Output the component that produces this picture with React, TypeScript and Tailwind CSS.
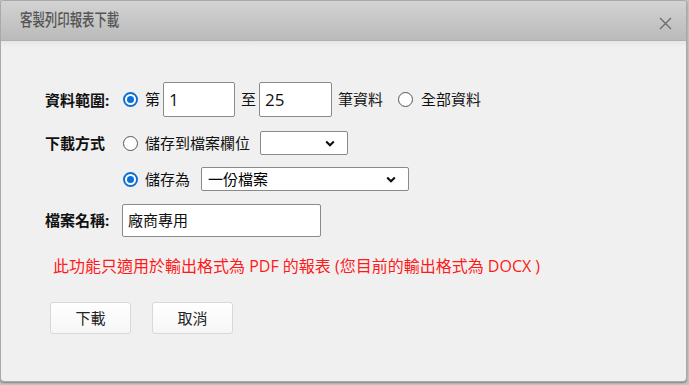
import React from "react";

const FONT = '"Open Sans", "Noto Sans CJK TC", sans-serif';

function Radio({ checked }: { checked?: boolean }) {
  return checked ? (
    <span className="w-[15px] h-[15px] rounded-full border-[2px] border-[#0b6fd3] bg-white flex items-center justify-center shrink-0">
      <span className="w-[7px] h-[7px] rounded-full bg-[#0b6fd3]" />
    </span>
  ) : (
    <span className="block w-[15px] h-[15px] rounded-full border border-[#555] bg-white shrink-0" />
  );
}

function Chevron() {
  return (
    <svg width="10" height="7" viewBox="0 0 10 7" className="shrink-0">
      <polyline points="1.2,1.4 5,5.2 8.8,1.4" fill="none" stroke="#111" strokeWidth="2.1" />
    </svg>
  );
}

function Select({ w, text }: { w: string; text?: string }) {
  return (
    <div className={`${w} h-[24px] bg-white border border-[#8a8a8a] rounded-[2px] flex items-center justify-between pl-[6px] pr-[12px]`}>
      <span className="text-[15px] text-black leading-none">{text}</span>
      <Chevron />
    </div>
  );
}

export default function App() {
  return (
    <div className="w-[689px] h-[385px] bg-[#c4c4c4] overflow-hidden relative" style={{ fontFamily: FONT }}>
      <div className="w-[687px] h-[382px] bg-[#f0f0f0] border border-[#a9a9a9] rounded-[4px] overflow-hidden flex flex-col shadow-[0_1px_2px_rgba(0,0,0,0.35)]">
        <div className="h-[40px] shrink-0 bg-gradient-to-b from-[#d3d3d3] to-[#bababa] flex items-center justify-between pl-[19px] pr-[14px] border-b border-[#b0b0b0]">
          <span className="text-[17px] font-medium text-[#555] leading-none mt-[-3px] scale-x-[0.73] origin-left whitespace-nowrap">客製列印報表下載</span>
          <svg width="13" height="13" viewBox="0 0 13 13" className="mt-[6px]">
            <path d="M1 1 L12 12 M12 1 L1 12" stroke="#6a6a6a" strokeWidth="1.3" />
          </svg>
        </div>
        <div className="flex-1 bg-gradient-to-b from-[#e6e6e6] to-[#f0f0f0] bg-[length:100%_6px] bg-no-repeat pl-[44px] pt-[41px] text-[15px] text-[#111]">
          {/* Row 1 */}
          <div className="flex items-center h-[35px]">
            <span className="w-[78px] font-bold leading-none mt-[2px]">資料範圍:</span>
            <Radio checked />
            <span className="ml-[7px] leading-none">第</span>
            <div className="ml-[3px] w-[72px] h-[35px] bg-white border border-[#8a8a8a] rounded-[2px] flex items-center pl-[5px] text-[17px]">1</div>
            <span className="ml-[6px] leading-none">至</span>
            <div className="ml-[3px] w-[73px] h-[35px] bg-white border border-[#8a8a8a] rounded-[2px] flex items-center pl-[5px] text-[17px]">25</div>
            <span className="ml-[6px] leading-none">筆資料</span>
            <span className="ml-[15px]"><Radio /></span>
            <span className="ml-[8px] leading-none">全部資料</span>
          </div>
          {/* Row 2 */}
          <div className="flex items-center h-[24px] mt-[14px]">
            <span className="w-[78px] font-bold leading-none">下載方式</span>
            <Radio />
            <span className="ml-[7px] leading-none">儲存到檔案欄位</span>
            <div className="ml-[10px]"><Select w="w-[88px]" /></div>
          </div>
          {/* Row 3 */}
          <div className="flex items-center h-[24px] mt-[12px]">
            <span className="w-[78px]" />
            <Radio checked />
            <span className="ml-[7px] leading-none">儲存為</span>
            <div className="ml-[11px]"><Select w="w-[208px]" text="一份檔案" /></div>
          </div>
          {/* Row 4 */}
          <div className="flex items-center h-[33px] mt-[13px]">
            <span className="w-[77px] font-bold leading-none">檔案名稱:</span>
            <div className="w-[199px] h-[33px] bg-white border border-[#8a8a8a] rounded-[2px] flex items-center pl-[5px] text-[15px]">廠商專用</div>
          </div>
          {/* Red note */}
          <div className="mt-[19px] ml-[8px] h-[20px] leading-[20px] text-[#ff1a1a] text-[16px] whitespace-nowrap">
            此功能只適用於輸出格式為 PDF 的報表 (您目前的輸出格式為 DOCX )
          </div>
          {/* Buttons */}
          <div className="flex mt-[26px] ml-[5px] gap-[21px]">
            <button className="w-[81px] h-[32px] rounded-[3px] border border-[#d8d8d8] bg-gradient-to-b from-white to-[#f6f6f6] text-[15px] text-[#222]">下載</button>
            <button className="w-[81px] h-[32px] rounded-[3px] border border-[#d8d8d8] bg-gradient-to-b from-white to-[#f6f6f6] text-[15px] text-[#222]">取消</button>
          </div>
        </div>
      </div>
    </div>
  );
}
